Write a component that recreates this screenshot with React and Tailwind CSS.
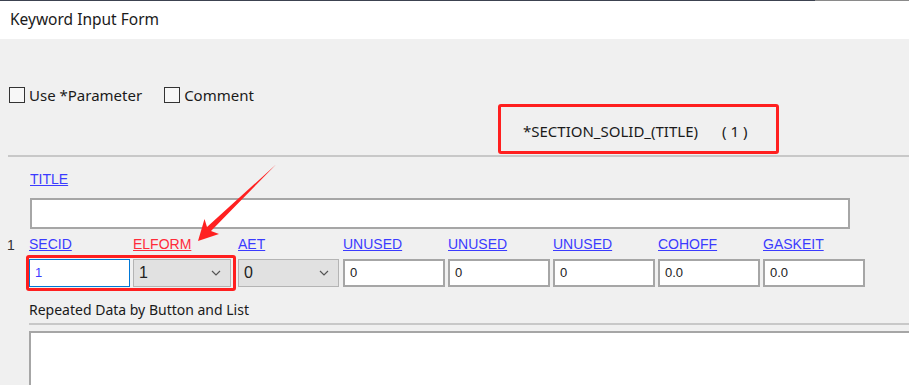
import React from "react";

const ui = { fontFamily: '"Noto Sans", "Open Sans", sans-serif' };
const ms = { fontFamily: '"Liberation Sans", Arial, sans-serif' };

const fields = [
  { label: "SECID", kind: "input", value: "1", w: "w-[101px]", ml: "ml-[0px]" },
  { label: "ELFORM", kind: "select", value: "1", w: "w-[98px]", ml: "ml-[3px]", red: true },
  { label: "AET", kind: "select", value: "0", w: "w-[101px]", ml: "ml-[7px]" },
  { label: "UNUSED", kind: "input", value: "0", w: "w-[102px]", ml: "ml-[4px]" },
  { label: "UNUSED", kind: "input", value: "0", w: "w-[102px]", ml: "ml-[3px]" },
  { label: "UNUSED", kind: "input", value: "0", w: "w-[102px]", ml: "ml-[3px]" },
  { label: "COHOFF", kind: "input", value: "0.0", w: "w-[102px]", ml: "ml-[3px]" },
  { label: "GASKEIT", kind: "input", value: "0.0", w: "w-[102px]", ml: "ml-[3px]" },
];

function Chevron() {
  return (
    <svg width="10" height="6" viewBox="0 0 10 6" className="shrink-0">
      <path d="M1 1 L5 5 L9 1" fill="none" stroke="#555" strokeWidth="1.2" />
    </svg>
  );
}

function Field({ f, first }) {
  if (f.kind === "select") {
    return (
      <div className={`${f.w} h-[28px] bg-[#e1e1e1] border border-[#b4b4b4] flex items-center justify-between pl-[5px] pr-[9px] text-[16px] text-[#222]`} style={ms}>
        <span>{f.value}</span>
        <Chevron />
      </div>
    );
  }
  return (
    <div
      className={`${f.w} h-[28px] bg-white flex items-center pl-[5px] text-[13px] ${
        first ? "border border-[#0078d7] text-[#3b3bff]" : "border-2 border-[#a6a6a6] text-[#222]"
      }`}
      style={ms}
    >
      {f.value}
    </div>
  );
}

export default function App() {
  return (
    <div className="relative w-[909px] h-[385px] overflow-hidden bg-[#f0f0f0] text-[#1a1a1a]" style={ui}>
      {/* window top edge */}
      <div className="flex h-[1px]">
        <div className="flex-1 bg-[#3c4250]" />
        <div className="w-[94px] bg-[#8a8a8a]" />
      </div>

      {/* title bar */}
      <div className="h-[38px] bg-white flex items-center pl-[10px] text-[15.5px]">
        Keyword Input Form
      </div>

      {/* options */}
      <div className="flex items-center h-[16px] mt-[48px] pl-[9px] text-[15px]">
        <div className="w-[16px] h-[16px] border border-[#333] bg-[#f7f7f7]" />
        <span className="ml-[4px]">Use *Parameter</span>
        <div className="w-[16px] h-[16px] border border-[#333] bg-[#f7f7f7] ml-[22px]" />
        <span className="ml-[4px]">Comment</span>
      </div>

      {/* keyword name */}
      <div className="ml-[498px] mt-[1px] w-[281px] h-[50px] border-[3px] border-[#ff1f1f] rounded-[3px] flex items-center pl-[22px] pt-[5px] text-[15px]">
        <span>*SECTION_SOLID_(TITLE)</span>
        <span className="ml-[24px]">( 1 )</span>
      </div>

      <div className="h-[2px] bg-[#c8c8c8] ml-[8px] mt-[1px]" />

      {/* title */}
      <div className="ml-[30px] mt-[14px] h-[16px] leading-[16px] text-[14px] text-[#3b3bff] underline" style={ms}>
        TITLE
      </div>
      <div className="ml-[30px] mt-[11px] w-[820px] h-[31px] bg-white border-2 border-[#a6a6a6]" />

      {/* card 1 */}
      <div className="relative flex mt-[7px]">
        <div className="w-[29px] pl-[7px] pt-[1px] text-[14px] leading-[16px] text-[#333]" style={ms}>1</div>
        <div className="flex">
          {fields.map((f, i) => (
            <div key={i} className={`flex flex-col ${f.ml}`}>
              <div
                className={`h-[16px] leading-[16px] text-[14px] underline ${f.red ? "text-[#ff2b3a]" : "text-[#3b3bff]"}`}
                style={ms}
              >
                {f.label}
              </div>
              <div className="mt-[7px]">
                <Field f={f} first={i === 0} />
              </div>
            </div>
          ))}
        </div>
        <div className="absolute left-[26px] top-[19px] w-[210px] h-[36px] border-[3px] border-[#ff1f1f] rounded-[3px]" />
      </div>

      {/* repeated data */}
      <div className="ml-[29px] mt-[14px] text-[14px] leading-[18px]">Repeated Data by Button and List</div>
      <div className="ml-[29px] mt-[4px] h-[2px] bg-[#c8c8c8]" />
      <div className="ml-[29px] mt-[6px] h-[80px] bg-white border-2 border-[#a6a6a6] border-r-0 border-b-0" />

      {/* annotation arrow */}
      <svg className="absolute left-0 top-0 pointer-events-none" width="909" height="385">
        <polygon points="198,241 204.5,219 207,227 276,164.5 211,231 219,234" fill="#ff2020" />
      </svg>
    </div>
  );
}
